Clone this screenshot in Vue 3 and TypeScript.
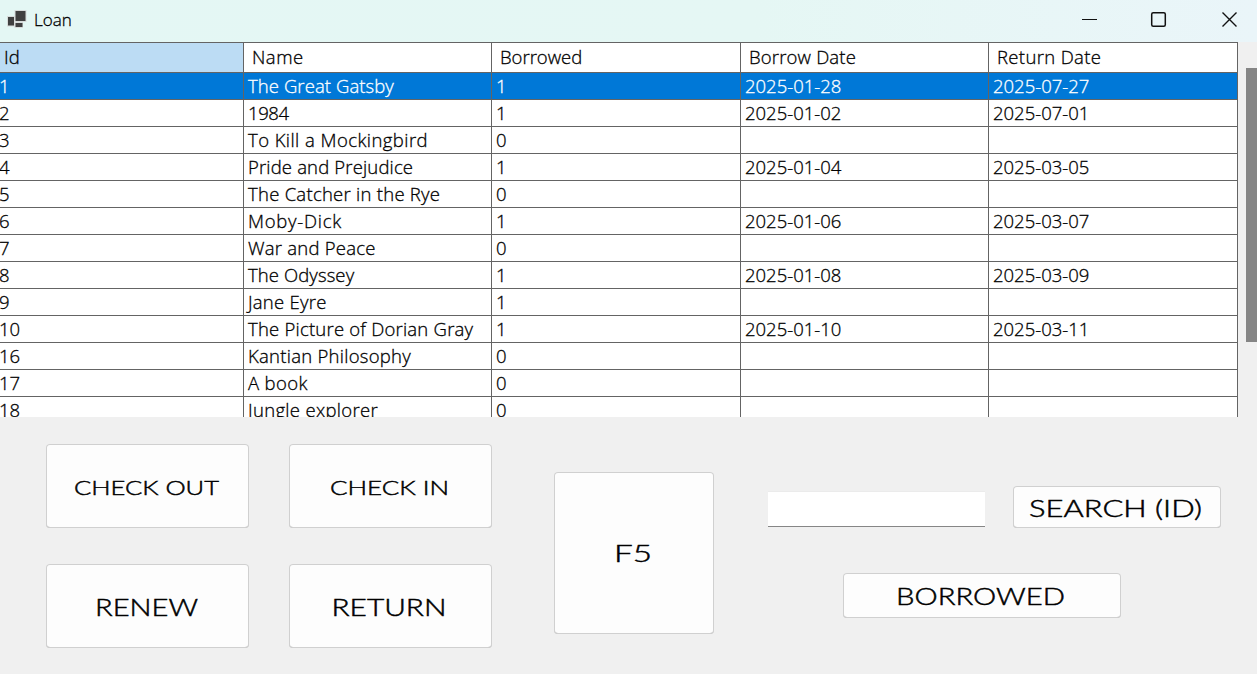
<script setup lang="ts">
interface Column {
  label: string
  tracking: number
}

interface Loan {
  id: number
  name: string
  tracking: number
  borrowed: number
  from?: string
  to?: string
}

interface Action {
  key: string
  label: string
  w: number
  h: number
  x: number
  baseline: number
  length: number
  size: number
}

const columns: Column[] = [
  { label: 'Id', tracking: 0 },
  { label: 'Name', tracking: 0.5 },
  { label: 'Borrowed', tracking: 0 },
  { label: 'Borrow Date', tracking: 0.18 },
  { label: 'Return Date', tracking: 0.35 },
]

const loans: Loan[] = [
  { id: 1, name: 'The Great Gatsby', tracking: 0.08, borrowed: 1, from: '2025-01-28', to: '2025-07-27' },
  { id: 2, name: '1984', tracking: -0.4, borrowed: 1, from: '2025-01-02', to: '2025-07-01' },
  { id: 3, name: 'To Kill a Mockingbird', tracking: 0.44, borrowed: 0 },
  { id: 4, name: 'Pride and Prejudice', tracking: 0.16, borrowed: 1, from: '2025-01-04', to: '2025-03-05' },
  { id: 5, name: 'The Catcher in the Rye', tracking: 0.26, borrowed: 0 },
  { id: 6, name: 'Moby-Dick', tracking: 0.75, borrowed: 1, from: '2025-01-06', to: '2025-03-07' },
  { id: 7, name: 'War and Peace', tracking: 0.23, borrowed: 0 },
  { id: 8, name: 'The Odyssey', tracking: 0.1, borrowed: 1, from: '2025-01-08', to: '2025-03-09' },
  { id: 9, name: 'Jane Eyre', tracking: 0.25, borrowed: 1 },
  { id: 10, name: 'The Picture of Dorian Gray', tracking: 0.22, borrowed: 1, from: '2025-01-10', to: '2025-03-11' },
  { id: 16, name: 'Kantian Philosophy', tracking: 0.27, borrowed: 0 },
  { id: 17, name: 'A book', tracking: 0.35, borrowed: 0 },
  { id: 18, name: 'Jungle explorer', tracking: 0.33, borrowed: 0 },
]

const selectedId = 1

const grid: Action[] = [
  { key: 'out', label: 'CHECK OUT', w: 203, h: 84, x: 28, baseline: 51, length: 145, size: 19.5 },
  { key: 'in', label: 'CHECK IN', w: 203, h: 84, x: 41, baseline: 51, length: 119, size: 19.5 },
  { key: 'renew', label: 'RENEW', w: 203, h: 84, x: 49, baseline: 52, length: 103, size: 22.5 },
  { key: 'return', label: 'RETURN', w: 203, h: 84, x: 42.5, baseline: 52, length: 115, size: 22.5 },
]
const refresh: Action[] = [
  { key: 'f5', label: 'F5', w: 160, h: 162, x: 60, baseline: 90, length: 38, size: 22.5 },
]
const search: Action[] = [
  { key: 'search', label: 'SEARCH (ID)', w: 208, h: 42, x: 16, baseline: 31, length: 173, size: 22.5 },
]
const filter: Action[] = [
  { key: 'borrowed', label: 'BORROWED', w: 278, h: 45, x: 53, baseline: 32, length: 169, size: 22.5 },
]
</script>

<template>
  <div class="window">
    <header class="titlebar">
      <svg class="app-icon" width="20" height="20" viewBox="0 0 20 20">
        <path d="M7.500 1h12v12h-3.500v6h-8.500v-1.500h-7.500v-10.500h7.500z" fill="#d8dcdb" />
        <rect x="8.500" y="2" width="10" height="10" fill="#404040" />
        <rect x="1" y="8" width="6" height="8.500" fill="#404040" />
        <rect x="8.500" y="14" width="7" height="4" fill="#404040" />
      </svg>
      <span class="title">Loan</span>
      <svg class="controls" width="160" height="20" viewBox="0 0 160 20" fill="none" stroke="#111">
        <path d="M2 10.500h15" stroke-width="1" />
        <rect x="71.700" y="3.700" width="13.600" height="13.600" rx="1.500" stroke-width="1.500" />
        <path d="M142.500 3.500l14 14M156.500 3.500l-14 14" stroke-width="1.400" />
      </svg>
    </header>

    <section class="table-area">
      <div class="table">
        <div class="row head">
          <div v-for="(c, i) in columns" :key="c.label" class="cell" :class="{ active: i === 0 }" :style="{ letterSpacing: c.tracking + 'px' }">{{ c.label }}</div>
        </div>
        <div v-for="l in loans" :key="l.id" class="row" :class="{ selected: l.id === selectedId }">
          <div class="cell id">{{ l.id }}</div>
          <div class="cell" :style="{ letterSpacing: l.tracking + 'px' }">{{ l.name }}</div>
          <div class="cell">{{ l.borrowed }}</div>
          <div class="cell">{{ l.from }}</div>
          <div class="cell">{{ l.to }}</div>
        </div>
      </div>
      <div class="scroll"><div class="thumb"></div></div>
    </section>

    <section class="panel">
      <div class="button-grid">
        <button v-for="a in grid" :key="a.key" class="btn">
          <svg :width="a.w" :height="a.h">
            <text :x="a.x" :y="a.baseline" :textLength="a.length" :font-size="a.size" lengthAdjust="spacingAndGlyphs">{{ a.label }}</text>
          </svg>
        </button>
      </div>
      <button v-for="a in refresh" :key="a.key" class="btn refresh">
        <svg :width="a.w" :height="a.h">
          <text :x="a.x" :y="a.baseline" :textLength="a.length" :font-size="a.size" lengthAdjust="spacingAndGlyphs">{{ a.label }}</text>
        </svg>
      </button>
      <div class="lookup">
        <div class="search-row">
          <input class="field" type="text" />
          <button v-for="a in search" :key="a.key" class="btn">
            <svg :width="a.w" :height="a.h">
              <text :x="a.x" :y="a.baseline" :textLength="a.length" :font-size="a.size" lengthAdjust="spacingAndGlyphs">{{ a.label }}</text>
            </svg>
          </button>
        </div>
        <button v-for="a in filter" :key="a.key" class="btn filter">
          <svg :width="a.w" :height="a.h">
            <text :x="a.x" :y="a.baseline" :textLength="a.length" :font-size="a.size" lengthAdjust="spacingAndGlyphs">{{ a.label }}</text>
          </svg>
        </button>
      </div>
    </section>
  </div>
</template>

<style>
body {
  margin: 0;
  overflow: hidden;
}
</style>

<style scoped>
.window {
  width: 1257px;
  height: 674px;
  overflow: hidden;
  background: #f0f0f0;
  color: #000;
  font-family: 'Open Sans', 'Noto Sans', sans-serif;
  font-weight: 300;
  -webkit-text-stroke: 0.3px currentColor;
}
.titlebar {
  display: flex;
  align-items: center;
  height: 42px;
  box-sizing: border-box;
  padding: 0 17px 4px 7px;
  background: linear-gradient(90deg, #e4f7f4 0%, #e5f7f4 60%, #eaf5f9 100%);
}
.app-icon {
  margin-top: -1px;
}
.title {
  margin-left: 7px;
  font-size: 17px;
  line-height: 24px;
  padding-top: 1px;
}
.controls {
  margin-left: auto;
}
.table-area {
  display: flex;
  height: 375px;
  overflow: hidden;
}
.table {
  width: 1238px;
  flex: none;
  border-top: 1px solid #646464;
}
.row {
  display: grid;
  grid-template-columns: 244px 248px 249px 248px 249px;
  height: 27px;
  background: #fff;
}
.cell {
  box-sizing: border-box;
  border-right: 1px solid #646464;
  border-bottom: 1px solid #646464;
  padding-left: 4px;
  font-size: 18.5px;
  line-height: 25px;
  white-space: nowrap;
  overflow: hidden;
}
.id {
  padding-left: 0;
  text-indent: -1px;
}
.head {
  height: 30px;
}
.head .cell {
  padding-left: 8px;
  line-height: 27px;
}
.head .active {
  padding-left: 4px;
  background: #bcdcf4;
}
.selected {
  background: #0078d7;
  color: #fff;
}
.scroll {
  flex: 1;
  padding: 26px 0 0 8px;
}
.thumb {
  height: 274px;
  background: #858585;
}
.panel {
  display: flex;
  align-items: flex-start;
  height: 257px;
  padding-left: 46px;
}
.button-grid {
  display: grid;
  grid-template-columns: 203px 203px;
  gap: 36px 40px;
  margin-top: 27px;
}
.btn {
  display: block;
  flex: none;
  padding: 0;
  border: 0;
  border-radius: 4px;
  background: #fdfdfd;
  box-shadow: inset 0 0 0 1px #d0d0d0, inset 0 -1px 0 #b8b8b8;
}
.btn svg {
  display: block;
}
.btn text {
  font-family: Lato, 'Open Sans', sans-serif;
  font-weight: 300;
  fill: #000;
  stroke: #000;
  stroke-width: 0.45px;
}
.refresh {
  margin: 55px 0 0 62px;
}
.lookup {
  margin: 69px 0 0 54px;
}
.search-row {
  display: flex;
  align-items: flex-start;
  gap: 28px;
}
.field {
  width: 217px;
  height: 36px;
  margin: 5px 0 0;
  padding: 0 6px;
  box-sizing: border-box;
  border: 0;
  border-top: 1px solid #ebebeb;
  border-bottom: 1px solid #868686;
  border-radius: 0;
  background: #fff;
  outline: none;
}
.filter {
  margin: 45px 0 0 75px;
}
</style>
